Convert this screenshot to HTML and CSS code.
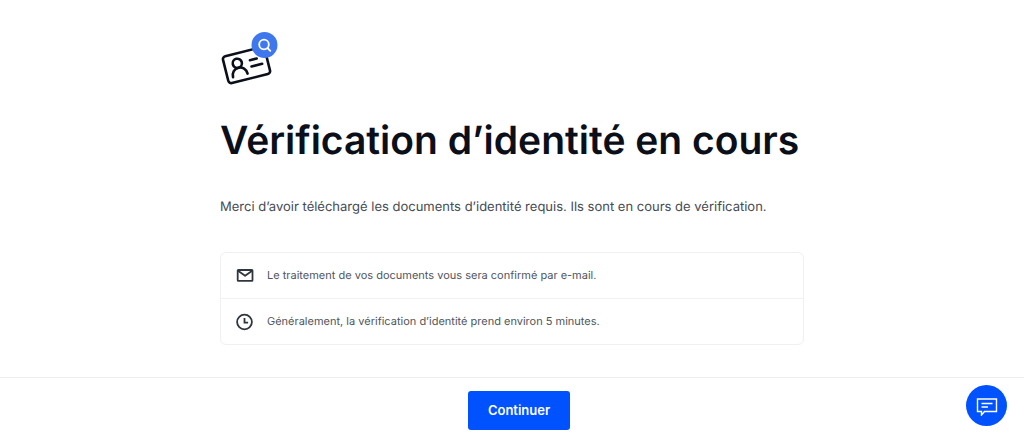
FILE: index.html
```
<!DOCTYPE html>
<html lang="fr">
<head>
    <meta charset="UTF-8">
    <meta name="viewport" content="width=device-width, initial-scale=1.0">
    <title>Vérification d’identité en cours</title>
    <link rel="stylesheet" href="styles.css">
</head>
<body>
    <main class="container">
        <svg class="id-icon" viewBox="0 0 58 54" aria-hidden="true">
            <g transform="rotate(-14 27 34)" fill="none" stroke="#0b0f19" stroke-width="2.6" stroke-linecap="round" stroke-linejoin="round">
                <rect x="5" y="20.2" width="43" height="27.6" rx="3"/>
                <circle cx="18" cy="30" r="4.6"/>
                <path d="M10.5 42.5c0-4.8 3.3-7.9 7.5-7.9s7.5 3.1 7.5 7.9"/>
                <path d="M31 30h7M31 36.5h11"/>
            </g>
            <circle cx="44.5" cy="14" r="13" fill="#3f78ee"/>
            <g fill="none" stroke="#fff" stroke-width="1.8" stroke-linecap="round">
                <circle cx="44" cy="13.5" r="4.8"/>
                <path d="M47.5 17l2.8 2.8"/>
            </g>
        </svg>

        <h1>Vérification d’identité en cours</h1>
        <p class="intro">Merci d’avoir téléchargé les documents d’identité requis. Ils sont en cours de vérification.</p>

        <ul class="info-list">
            <li>
                <svg viewBox="0 0 18 18" aria-hidden="true">
                    <g fill="none" stroke="#30363f" stroke-width="1.8" stroke-linejoin="round">
                        <rect x="1.7" y="3" width="14.8" height="10.8" rx="0.6"/>
                        <path d="M2 3.8l7.1 5 7.1-5"/>
                    </g>
                </svg>
                <span>Le traitement de vos documents vous sera confirmé par e-mail.</span>
            </li>
            <li>
                <svg viewBox="0 0 18 18" aria-hidden="true">
                    <g fill="none" stroke="#30363f" stroke-width="1.8">
                        <circle cx="8.5" cy="9" r="7.4"/>
                        <path d="M8.5 5v4.6h3.6"/>
                    </g>
                </svg>
                <span>Généralement, la vérification d’identité prend environ 5 minutes.</span>
            </li>
        </ul>
    </main>

    <footer class="footer">
        <button type="button" class="continue-button">Continuer</button>
    </footer>

    <button type="button" class="chat-button" aria-label="Ouvrir le chat">
        <svg viewBox="0 0 22 20" aria-hidden="true">
            <g fill="none" stroke="#fff" stroke-width="1.4">
                <path d="M1.5 3h19v12.5H8.5L5.5 19v-3.5h-4z"/>
                <path d="M5.5 7.5h11M5.5 11h6.5"/>
            </g>
        </svg>
    </button>
</body>
</html>
```
FILE: styles.css
```
* {
    box-sizing: border-box;
}
body {
    margin: 0;
    min-height: 100vh;
    display: flex;
    flex-direction: column;
    font-family: Inter, "Liberation Sans", sans-serif;
    text-rendering: geometricPrecision;
    background-color: #ffffff;
    color: #0b0f19;
}
.container {
    flex: 1;
    width: 100%;
    max-width: 624px;
    margin: 0 auto;
    padding: 31px 20px;
}
.id-icon {
    display: block;
    width: 58px;
    height: 54px;
}
h1 {
    margin: 32px 0 0;
    font-size: 39px;
    font-weight: 600;
    line-height: 48px;
}
.intro {
    margin: 32px 0 0;
    font-size: 13px;
    line-height: 20px;
    color: #454b53;
}
.info-list {
    margin: 35px 0 0;
    padding: 0;
    list-style: none;
    border: 1px solid #f0f0f1;
    border-radius: 6px;
}
.info-list li {
    display: flex;
    align-items: center;
    gap: 13px;
    padding: 13px 15px;
    font-size: 11px;
    line-height: 19px;
    color: #50555c;
}
.info-list li + li {
    border-top: 1px solid #f0f0f1;
}
.info-list svg {
    flex: none;
    width: 18px;
    height: 18px;
}
.footer {
    display: flex;
    justify-content: center;
    padding: 13px 0 7px 14px;
    border-top: 1px solid #ededee;
}
button {
    border: none;
    background-color: #0052ff;
    color: #ffffff;
    font-family: inherit;
    cursor: pointer;
}
.continue-button {
    padding: 10px 20px;
    border-radius: 3px;
    font-size: 13px;
    font-weight: 600;
    line-height: 19px;
}
.chat-button {
    position: fixed;
    right: 17px;
    bottom: 11px;
    display: flex;
    align-items: center;
    justify-content: center;
    width: 41px;
    height: 41px;
    padding: 0;
    border-radius: 50%;
}
.chat-button svg {
    width: 22px;
    height: 20px;
}
```
